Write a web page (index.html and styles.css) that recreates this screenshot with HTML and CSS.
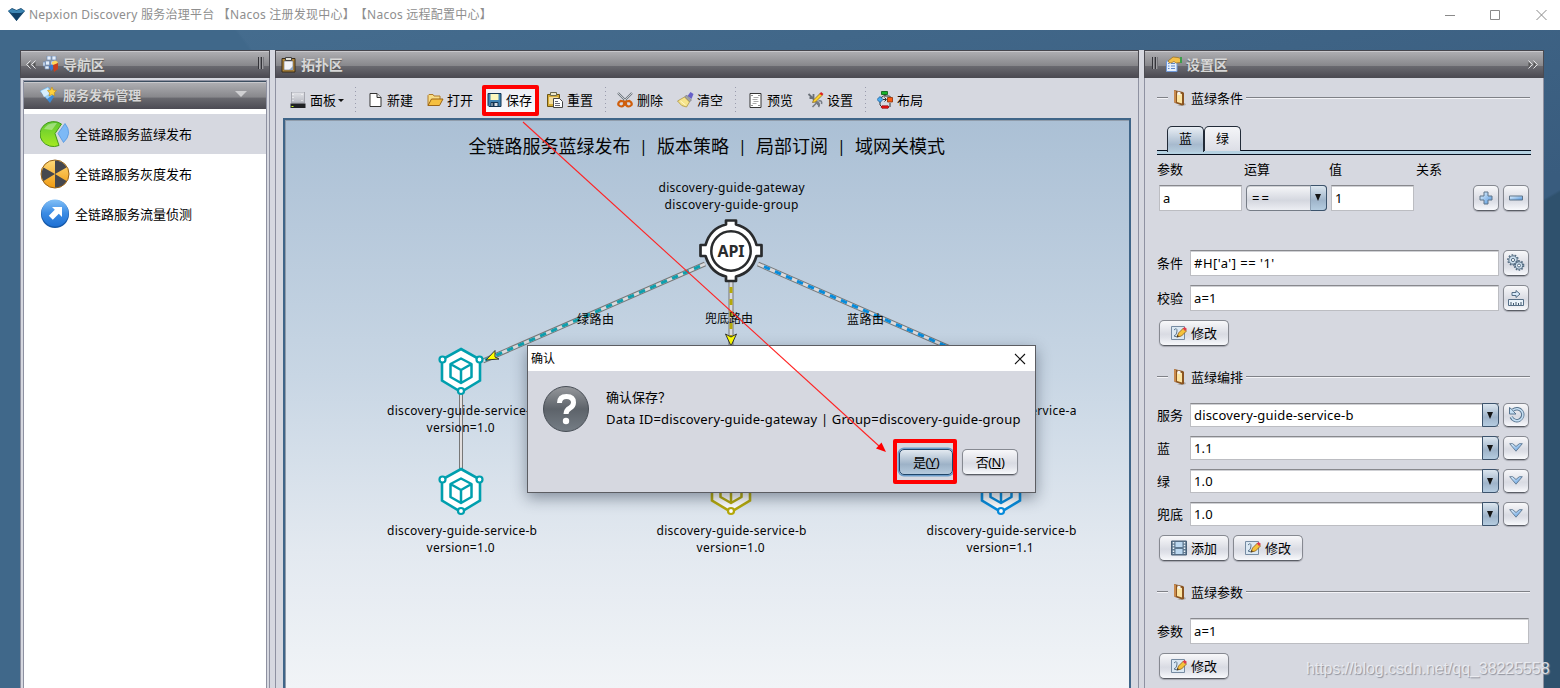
FILE: index.html
```
<!DOCTYPE html>
<html lang="zh-CN">
<head>
<meta charset="utf-8">
<title>Nepxion Discovery 服务治理平台</title>
<link rel="stylesheet" href="styles.css">
</head>
<body>
<svg class="defs" width="0" height="0">
  <defs>
    <linearGradient id="gBlue" x1="0" y1="0" x2="1" y2="1"><stop offset="0" stop-color="#eaf7ff"/><stop offset="1" stop-color="#4d92dc"/></linearGradient>
    <linearGradient id="gBall" x1="0" y1="0" x2="0" y2="1"><stop offset="0" stop-color="#82c0f7"/><stop offset=".5" stop-color="#3c8ce4"/><stop offset="1" stop-color="#1d70d4"/></linearGradient>
    <linearGradient id="gGreen" x1="0" y1="0" x2="0" y2="1"><stop offset="0" stop-color="#5fc832"/><stop offset="1" stop-color="#a4ea22"/></linearGradient>
    <linearGradient id="gAmber" x1="0" y1="0" x2="0" y2="1"><stop offset="0" stop-color="#ffdb7a"/><stop offset="1" stop-color="#f09a10"/></linearGradient>
    <linearGradient id="gAsk" x1="0" y1="0" x2="0" y2="1"><stop offset="0" stop-color="#96989c"/><stop offset=".5" stop-color="#5d636a"/><stop offset="1" stop-color="#757d85"/></linearGradient>
    <linearGradient id="gPage" x1="0" y1="0" x2="0" y2="1"><stop offset="0" stop-color="#e4e5ea"/><stop offset="1" stop-color="#b6b8c0"/></linearGradient>
    <symbol id="i-board" viewBox="0 0 13 16"><path d="M12 13l1 2-4 1H4z" fill="#aaa"/><path d="M1 0l9 2 1 1v12l-2 .5-7-2.500-1-1z" fill="#8a5420"/><path d="M1 0l2 1v12l-2-1z" fill="#c98a4d"/><path d="M4 3l5 1v9.500L4 12z" fill="#fbe4a2"/><path d="M4.500 1.500l3 .7v3l-3-.7z" fill="#f3f3f3"/></symbol>
    <symbol id="i-edit" viewBox="0 0 16 16"><path d="M.5 1.500h13v13H.5z" fill="#dbe8f3" stroke="#768ba2"/><path d="M3 5q3-3 3 1t-3 5q3 2 6 0" fill="none" stroke="#5e7890"/><path d="M6 12l1.500-4 5-5 3 3-5 5z" fill="#f5c23c" stroke="#8a5b16" stroke-width=".8"/><path d="M11.800 3.500L13.500 2l2.500 2-2 2z" fill="#e03a4c"/><path d="M6 12l.6-2 1.300 1.300z" fill="#222"/></symbol>
    <symbol id="i-check" viewBox="0 0 14 9"><path d="M.7.7h3L7 3.500 10.300.7h3L7 8.200z" fill="url(#gBlue)" stroke="#67809a"/></symbol>
    <symbol id="i-cube" viewBox="0 0 48 50" overflow="visible">
      <path d="M24 3L43 13.500v21L24 46 5 34.500v-21z" fill="#fff" stroke="currentColor" stroke-width="2.600"/>
      <path d="M24 12.500l10.500 5.500v13L24 37l-10.500-6V18zM13.500 18L24 24l10.500-6M24 24v13" fill="none" stroke="currentColor" stroke-width="2.500" stroke-linejoin="round"/>
      <g fill="#fff" stroke="currentColor" stroke-width="2.200"><circle cx="5.500" cy="13.500" r="3"/><circle cx="42.500" cy="13.500" r="3"/><circle cx="24" cy="45" r="3"/></g>
    </symbol>
  </defs>
</svg>

<header class="titlebar">
  <svg class="logo" width="17" height="13" viewBox="0 0 17 13"><path d="M0 3l4-3 4.500 2L13 0l4 3-8.500 10z" fill="#17496f"/><path d="M0 3l4-2 4.500 1.500L13 1l4 2-4 2H4z" fill="#3c86b4"/><path d="M4 5h9l-4.500 8z" fill="#0f3f66"/></svg>
  <span class="apptitle">Nepxion Discovery 服务治理平台 <span class="grp">【Nacos 注册发现中心】</span><span class="grp">【Nacos 远程配置中心】</span></span>
  <svg class="winctl" width="104" height="14" viewBox="0 0 104 14"><path d="M0 7.500h10M45.500 2.500h9v9h-9zM91.500 2l10 10M101.500 2l-10 10" fill="none" stroke="#8a8a8a"/></svg>
</header>

<main class="desk">
  <section class="panel nav">
    <div class="bar">
      <svg width="10" height="9" viewBox="0 0 10 9"><path d="M4.500.5L.5 4.500l4 4M9.500.5l-4 4 4 4" fill="none" stroke="#e2e2e4"/><path d="M4.500 2v5L2 4.500zM9.500 2v5L7 4.500z" fill="#555"/></svg>
      <svg class="ico-nav" width="16" height="16" viewBox="0 0 16 16"><path d="M4 0h4v4H4zM9 0h4v4H9zM2.500 5h4v4h-4zM0 6h2v4H0zM2 10h4v3H2zM8 5h4v4H8z" fill="#e4eefa" stroke="#6f8cb8" stroke-width=".7"/><path d="M6 10l4-2v5l-2 2z" fill="#3a78d0"/><path d="M9 6l3-1.500L15 6l-2 3.500-4-1z" fill="#ffd95c"/><path d="M10 9l5-2v6l-4 3z" fill="#c93f1c"/></svg>
      <b>导航区</b>
      <span class="grip"></span>
    </div>
    <div class="navbody">
      <div class="bar sub">
        <svg width="17" height="17" viewBox="0 0 17 17"><path d="M0 5l8-4 2 2 5 6-5 8z" fill="#3f8ad4"/><path d="M0 5l8-4 6 7-7 5z" fill="#9ad0f7"/><path d="M1 5l7-3 1 6-5 3z" fill="#d6eefc"/><path d="M12 1l1.300 3 3.200.5-2.300 2.300.5 3.200-2.700-1.500L9 10l.7-3L7.500 4.500l3-.5z" fill="#ffd23c" stroke="#c08914" stroke-width=".6"/></svg>
        <b>服务发布管理</b>
        <span class="tri"></span>
      </div>
      <ul class="menu">
        <li class="on">
          <svg width="30" height="28" viewBox="0 0 30 28"><path d="M15 13.500L21.500 4A13.500 12.500 0 1 0 19 25.500z" fill="url(#gGreen)" stroke="#469a1b"/><path d="M4 9Q8 2 17 3L12 10z" fill="#fff" opacity=".35"/><path d="M18 13.500L25 3.500q8 10-1.500 19z" fill="#7db9f6" stroke="#4b8fdc" stroke-width=".7"/></svg>全链路服务蓝绿发布</li>
        <li>
          <svg width="30" height="30" viewBox="0 0 30 30"><circle cx="15" cy="15" r="14" fill="url(#gAmber)" stroke="#96621b"/><path d="M15 15L15 1.500A13.500 13.500 0 0 1 26.500 8.500zM15 15L26.500 22A13.500 13.500 0 0 1 15 28.500zM15 15L3.500 22A13.500 13.500 0 0 1 3.500 8.500z" fill="#45474e"/></svg>全链路服务灰度发布</li>
        <li>
          <svg width="30" height="30" viewBox="0 0 30 30"><circle cx="15" cy="15" r="14" fill="#1558a8"/><circle cx="15" cy="14" r="13.500" fill="url(#gBall)"/><path d="M12 8h10v10l-3.200-3.200-6 6-4-4 6-6z" fill="#fff"/></svg>全链路服务流量侦测</li>
      </ul>
    </div>
  </section>

  <section class="panel topo">
    <div class="bar">
      <svg width="15" height="17" viewBox="0 0 15 17"><path d="M1 2.500h13v13.500H1z" fill="#b58a3a" stroke="#3a2c18"/><path d="M3 5h9v9H3z" fill="#f2f5fa" stroke="#4a4a52" stroke-width=".5"/><path d="M8 14l4-4v4z" fill="#8ea4c0"/><path d="M4.500 1.500h6v3h-6z" fill="#dcdcd4" stroke="#444"/></svg>
      <b>拓扑区</b>
    </div>
    <div class="toolbar">
      <button class="tool wide"><svg width="16" height="16" viewBox="0 0 16 16"><path d="M1 0h13v11H1z" fill="url(#gPage)" stroke="#9b9ca4" stroke-width=".8"/><path d="M2 2h1v1H2zM2 5h1v1H2zM2 8h1v1H2zM11 2h1v1h-1zM11 8h1v1h-1z" fill="#fff"/><path d="M0 11.500h15V16H0z" fill="#202124"/><path d="M1 14h2v1H1z" fill="#cf2"/></svg>面板<i class="caret"></i></button>
      <span class="sep"></span>
      <button class="tool"><svg width="16" height="16" viewBox="0 0 16 16"><path d="M2.500 1.500h7l4 4v9h-11z" fill="#fff" stroke="#333"/><path d="M9.500 1.500v4h4" fill="#ddd" stroke="#333"/></svg>新建</button>
      <button class="tool"><svg width="16" height="16" viewBox="0 0 16 16"><path d="M.5 13.500V3.500l1-1h4l1 1.500h6v3" fill="#f7dc86" stroke="#b07a28"/><path d="M.5 13.500L4 7h11.500l-3.500 6.500z" fill="#f5bf3f" stroke="#9c6516"/></svg>打开</button>
      <button class="tool save"><svg width="16" height="16" viewBox="0 0 16 16"><path d="M1.500 1.500h13v13H2.500l-1-1z" fill="#3f83b2" stroke="#123452"/><path d="M4 2h8v6H4z" fill="#fbf7bd"/><path d="M4.500 10.500h7v4h-7z" fill="#d8dde2" stroke="#123452"/><path d="M6 11h2v3H6z" fill="#123452"/></svg>保存</button>
      <button class="tool"><svg width="17" height="16" viewBox="0 0 17 16"><path d="M.5 2.500h12v12H.5z" fill="#d5ac37" stroke="#6d5515"/><path d="M3.500.5h6v3h-6z" fill="#eee8c8" stroke="#6d6a50"/><path d="M2 5h9v7H2z" fill="#f3dda0"/><path d="M6.500 6.500h6l3 3v6h-9z" fill="#fff" stroke="#444"/><path d="M8 9.500h3M8 11.500h5M8 13.500h5" stroke="#667"/></svg>重置</button>
      <span class="sep"></span>
      <button class="tool"><svg width="17" height="16" viewBox="0 0 17 16"><path d="M1 1l9 9M15 1L6 10" stroke="#6d747c" stroke-width="2.200"/><path d="M1 1l9 9M15 1L6 10" stroke="#dfe4e8" stroke-width=".8"/><path d="M7 9.500l-3.500-.5q-3 1.500-2 4 3 3 5.500 0zM9 9.500l3.500-.5q3 1.500 2 4-3 3-5.500 0z" fill="none" stroke="#cf5e0c" stroke-width="2.200"/></svg>删除</button>
      <button class="tool"><svg width="16" height="16" viewBox="0 0 16 16"><path d="M10 4l3-4 3 2-2 5z" fill="#6760c8"/><path d="M7 5l2-2 5 5-2 2z" fill="#a0a2a8" stroke="#666" stroke-width=".5"/><path d="M0 9l7-4 5 5-3 5q-5 0-9-6z" fill="#f6e48a" stroke="#a2893a" stroke-width=".7"/><path d="M3 9l5 4" stroke="#fff7c8"/></svg>清空</button>
      <span class="sep"></span>
      <button class="tool"><svg width="16" height="16" viewBox="0 0 16 16"><path d="M2.500 1.500h11v14h-11z" fill="#fff" stroke="#333"/><path d="M4 3h1v1H4zM11 3h1v1h-1zM4 13h1v1H4zM11 13h1v1h-1z" fill="#222"/><path d="M6 5.500h5M5 7.500h5M6 9.500h5M5 11.500h4" stroke="#aaa"/></svg>预览</button>
      <button class="tool"><svg width="16" height="17" viewBox="0 0 16 17"><path d="M1 2l5 5M6 2v4H2M6 7l6 7" fill="none" stroke="#6a7078" stroke-width="1.800"/><path d="M11 9q4-1 3 3M5 15l5-5q3 2 1 5" fill="none" stroke="#777c84" stroke-width="1.600"/><path d="M6 8l7-7 2 2-7 7-3 .5z" fill="#ffd32c" stroke="#80601a" stroke-width=".7"/><path d="M12 2l1.500-2L16 2l-1.500 1.500z" fill="#d22"/></svg>设置</button>
      <span class="sep"></span>
      <button class="tool"><svg width="17" height="18" viewBox="0 0 17 18"><path d="M8 2v3M3 10v4l2 2h7M13 12v4M3.500 7l3-2h6l1 1" fill="none" stroke="#333"/><path d="M4.500.5h6v3h-6z" fill="#18b42c" stroke="#065a10" stroke-width=".8"/><path d="M3 5.500L6 8.500 3 11.500 0 8.500z" fill="#49aaf0" stroke="#185a94" stroke-width=".8"/><path d="M10.500 6.500h5v4.500h-5z" fill="#fa5c12" stroke="#8a2e04" stroke-width=".8"/><path d="M5 14.800h6l1 1.200-1 1.300H5L4 16z" fill="#e11" stroke="#700" stroke-width=".6"/><path d="M6 8.500h3M7.500 6.500l2 2-2 2" fill="none" stroke="#333"/></svg>布局</button>
    </div>
    <div class="canvas">
      <svg class="graph" width="843" height="567" viewBox="285 120 843 567">
        <g font-size="18"><text x="468.500" y="153" textLength="162">全链路服务蓝绿发布</text><text x="657" y="153" textLength="72">版本策略</text><text x="756" y="153" textLength="72">局部订阅</text><text x="855" y="153" textLength="90">域网关模式</text></g>
        <g font-size="16"><text x="639" y="152">|</text><text x="738" y="152">|</text><text x="837" y="152">|</text></g>
        <g class="edges">
          <path d="M705 264L483 361" stroke="#777" stroke-width="5"/><path d="M705 264L483 361" stroke="#d9dadd" stroke-width="3"/><path d="M700 266.200L483 361" stroke="#0f9fae" stroke-width="3" stroke-dasharray="6.500 5.500"/>
          <path d="M731 281V350" stroke="#777" stroke-width="5"/><path d="M731 281V350" stroke="#d9dadd" stroke-width="3"/><path d="M731 287V350" stroke="#b5a90a" stroke-width="3" stroke-dasharray="6 6"/>
          <path d="M758 264L980 361" stroke="#777" stroke-width="5"/><path d="M758 264L980 361" stroke="#d9dadd" stroke-width="3"/><path d="M764 266.600L980 361" stroke="#078cdc" stroke-width="3" stroke-dasharray="6.500 5.500"/>
          <path d="M461 393v78M731 393v78M1001 393v78" stroke="#777" stroke-width="4"/><path d="M461 393v78M731 393v78M1001 393v78" stroke="#e3dfdf" stroke-width="2"/>
        </g>
        <path d="M486 360l9-9.500v6.500l4 2z" fill="#ff0" stroke="#333"/>
        <path d="M731 346l-5.500-12 5.500 3 5.500-3z" fill="#ff0" stroke="#333"/>
        <g stroke="#292b2d" stroke-width="2.700" fill="#fff"><path d="M726 220.500h10v4q16 4 20.500 20.500h5v11h-5q-5 17-20.500 20.500v4.500h-10v-4.500q-15-3.500-20.500-20.500h-5v-11h5q5-17 20.500-20.500z" stroke-linejoin="round"/><circle cx="731" cy="251" r="19.700" stroke-width="2.500"/></g>
        <text class="api" x="731" y="257" text-anchor="middle" textLength="27">API</text>
        <use href="#i-cube" x="437" y="346" width="48" height="50" color="#009fae"/>
        <use href="#i-cube" x="437" y="466" width="48" height="50" color="#009fae"/>
        <use href="#i-cube" x="707" y="466" width="48" height="50" color="#b5a90a"/>
        <use href="#i-cube" x="977" y="466" width="48" height="50" color="#078cdc"/>
        <g class="lab">
          <text x="658.500" y="192" textLength="146">discovery-guide-gateway</text><text x="664.500" y="209" textLength="134">discovery-guide-group</text>
          <text x="577" y="324" textLength="37">绿路由</text><text x="705" y="323" textLength="48">兜底路由</text><text x="847" y="324" textLength="37">蓝路由</text>
          <text x="387" y="415" textLength="150">discovery-guide-service-a</text><text x="426.500" y="432" textLength="68">version=1.0</text>
          <text x="387" y="535" textLength="150">discovery-guide-service-b</text><text x="426.500" y="552" textLength="68">version=1.0</text>
          <text x="656.500" y="535" textLength="150">discovery-guide-service-b</text><text x="696.500" y="552" textLength="68">version=1.0</text>
          <text x="926.500" y="415" textLength="150">discovery-guide-service-a</text>
          <text x="926.500" y="535" textLength="150">discovery-guide-service-b</text><text x="966.500" y="552" textLength="67">version=1.1</text>
        </g>
      </svg>
    </div>
  </section>

  <section class="panel setup">
    <div class="bar">
      <span class="grip"></span>
      <svg class="ico-set" width="17" height="16" viewBox="0 0 17 16"><path d="M1.500 5h10.500v10.500H1.500z" fill="#e4effc" stroke="#6e97d8"/><path d="M3 7.500h1.500M6 7.500h4M3 10h1.500M6 10h4M3 12.500h1.500M6 12.500h4" stroke="#5c86c8"/><path d="M3 5l5-4 5 .5 2.500 1v4L11 7 9 5.500 6 7 4 6.500z" fill="#f3c04a" stroke="#966a18" stroke-width=".7"/><path d="M15 1h2v6h-2z" fill="#3d9e4a"/></svg>
      <b>设置区</b>
      <svg class="chev" width="10" height="9" viewBox="0 0 10 9"><path d="M.5.5l4 4-4 4M5.500.5l4 4-4 4" fill="none" stroke="#e2e2e4"/><path d="M.5 2v5L3 4.500zM5.500 2v5L8 4.500z" fill="#555"/></svg>
    </div>
    <div class="form">
      <h3><svg width="13" height="16"><use href="#i-board"/></svg>蓝绿条件</h3>
      <div class="tabs"><span class="tab on">蓝</span><span class="tab">绿</span></div>
      <div class="cols"><span>参数</span><span>运算</span><span>值</span><span>关系</span></div>
      <div class="cond">
        <span class="field s">a</span><span class="combo op"><em>==</em><i class="drop"></i></span><span class="field s">1</span>
        <button class="sq first"><svg width="14" height="14" viewBox="0 0 14 14"><path d="M5 1h4v4h4v4H9v4H5V9H1V5h4z" fill="url(#gBlue)" stroke="#5e7489"/></svg></button>
        <button class="sq"><svg width="14" height="14" viewBox="0 0 14 14"><path d="M.5 5h13v4H.5z" fill="url(#gBlue)" stroke="#5e7489"/></svg></button>
      </div>
      <div class="row r1"><label>条件</label><span class="field expr">#H['a'] == '1'</span>
        <button class="sq"><svg width="18" height="18" viewBox="0 0 18 18"><g fill="#cfe0ee" stroke="#546c82"><circle cx="6" cy="6" r="4.200"/><circle cx="6" cy="6" r="5.200" fill="none" stroke-width="1.300" stroke-dasharray="1.700 1.500"/><circle cx="6" cy="6" r="1.600" fill="#fff"/><circle cx="12" cy="11.500" r="3.800"/><circle cx="12" cy="11.500" r="4.700" fill="none" stroke-width="1.300" stroke-dasharray="1.600 1.400"/><circle cx="12" cy="11.500" r="1.500" fill="#fff"/></g></svg></button></div>
      <div class="row r2"><label>校验</label><span class="field">a=1</span>
        <button class="sq"><svg width="18" height="18" viewBox="0 0 18 18"><path d="M5 3.500h4v-2l4 3.500-4 3.500v-2H5z" fill="#d8eafa" stroke="#556e86"/><path d="M1.500 10.500h15v6h-15z" fill="#eaf3fb" stroke="#556e86"/><path d="M4 16v-3M6.500 16v-2M9 16v-3M11.500 16v-2M14 16v-3" stroke="#40566c"/></svg></button></div>
      <div class="acts a1"><button class="btn"><svg width="16" height="16"><use href="#i-edit"/></svg>修改</button></div>

      <h3 class="h2"><svg width="13" height="16"><use href="#i-board"/></svg>蓝绿编排</h3>
      <div class="stack">
        <div class="row"><label>服务</label><span class="combo"><em>discovery-guide-service-b</em><i class="drop"></i></span><button class="sq"><svg width="17" height="17" viewBox="0 0 17 17"><path d="M5 4A6 6 0 1 1 3.200 11" fill="none" stroke="#587590" stroke-width="3.400"/><path d="M1.500 1.500V8H8L5.800 5.800 4.500 4z" fill="#c6dff3" stroke="#587590"/><path d="M5 4.200A6 6 0 1 1 3.400 11" fill="none" stroke="#c6dff3" stroke-width="1.600"/></svg></button></div>
        <div class="row"><label>蓝</label><span class="combo"><em>1.1</em><i class="drop"></i></span><button class="sq"><svg width="14" height="9"><use href="#i-check"/></svg></button></div>
        <div class="row"><label>绿</label><span class="combo"><em>1.0</em><i class="drop"></i></span><button class="sq"><svg width="14" height="9"><use href="#i-check"/></svg></button></div>
        <div class="row"><label>兜底</label><span class="combo"><em>1.0</em><i class="drop"></i></span><button class="sq"><svg width="14" height="9"><use href="#i-check"/></svg></button></div>
      </div>
      <div class="acts a2"><button class="btn"><svg width="16" height="16" viewBox="0 0 16 16"><path d="M.5 1h15v14H.5z" fill="#5e7890" stroke="#4a6178"/><path d="M4.500 2h7v5h-7zM4.500 9h7v5h-7z" fill="#bcd8f0"/><path d="M2.500 2v12M13.500 2v12" stroke="#eef5fb" stroke-width="1.500" stroke-dasharray="1.500 1.300"/></svg>添加</button><button class="btn"><svg width="16" height="16"><use href="#i-edit"/></svg>修改</button></div>

      <h3 class="h3"><svg width="13" height="16"><use href="#i-board"/></svg>蓝绿参数</h3>
      <div class="row r3"><label>参数</label><span class="field">a=1</span></div>
      <div class="acts a3"><button class="btn"><svg width="16" height="16"><use href="#i-edit"/></svg>修改</button></div>
    </div>
  </section>
</main>

<div class="dialog">
  <div class="dtitle">确认<svg width="12" height="12" viewBox="0 0 12 12"><path d="M1 1l10 10M11 1L1 11" stroke="#111" stroke-width="1.100"/></svg></div>
  <div class="dbody">
    <svg width="48" height="48" viewBox="0 0 48 48"><circle cx="24" cy="24" r="22.500" fill="url(#gAsk)" stroke="#484e56"/><path d="M17.500 18q0-6.500 7-6.500t7 6q0 3.500-3.500 5.500-4 2.200-4 6" fill="none" stroke="#fff" stroke-width="5"/><circle cx="24" cy="36" r="3.200" fill="#fff"/></svg>
    <p class="msg"><span>确认保存？</span><span class="data">Data ID=discovery-guide-gateway | Group=discovery-guide-group</span></p>
  </div>
  <div class="dacts"><button class="dbtn yes">是(<u>Y</u>)</button><button class="dbtn">否(<u>N</u>)</button></div>
</div>

<div class="mark m-save"></div>
<div class="mark m-yes"></div>
<svg class="arrow" width="366" height="336" viewBox="522 120 366 336"><path d="M523 122L879 446" stroke="#f22" stroke-width="1.100"/><path d="M886 452l-10-3.500 5.500-6z" fill="#f00"/></svg>
<div class="stamp">https://blog.csdn.net/qq_38225558</div>
</body>
</html>
```
FILE: styles.css
```
* { box-sizing: border-box; }
html, body { height: 688px; overflow: hidden; }
body { margin: 0; position: relative; display: flex; flex-direction: column; font: 13px/18px "Noto Sans", "Noto Sans CJK SC", sans-serif; color: #000; background: #fff; }
button { font: inherit; padding: 0; margin: 0; color: inherit; }
i, em { font-style: normal; }
svg { flex: none; display: block; }
.defs { position: absolute; }

.titlebar { height: 30px; flex: none; display: flex; align-items: center; padding: 0 11px 0 8px; background: #fff; color: #8e8e8e; }
.apptitle { margin-left: 4px; font-size: 12px; letter-spacing: .24px; white-space: nowrap; }
.grp { display: inline-block; width: 137px; }
.logo { margin-top: -2px; }
.winctl { margin: -1px 0 0 auto; }

.desk { flex: 1; min-height: 0; display: grid; grid-template-columns: 250px 864px 400px; column-gap: 5px; padding: 20px 16px 0 20px; background: linear-gradient(150deg, transparent 68%, #2f516d 68.200%), radial-gradient(ellipse 1300px 1500px at -250px 500px, #40688a 0 50%, transparent 50.2%), linear-gradient(168deg, #466e90 0, #395c7e 48%, #395c7e); }
.panel { min-width: 0; display: flex; flex-direction: column; background: #d6d8e0; border: 1px solid #8e91a1; border-width: 0 1px; box-shadow: 5px 0 #d6d8e0; }
.setup { box-shadow: none; }
.bar { height: 28px; flex: none; margin: 0 -1px; display: flex; align-items: center; padding: 0 5px 0 7px; border: 1px solid #4b4b52; border-top: 1px solid #46464d; box-shadow: inset 0 1px #c8c8cc; background: linear-gradient(#b0b0b4 0, #87878b 57%, #6a6a70 58%, #4c4b53 100%); color: #d7d7d7; }
.nav > .bar { padding-left: 5px; }
.topo > .bar { padding-left: 5px; }
.bar b { font-size: 14px; letter-spacing: -.1px; margin-top: 2px; text-shadow: 0 1px 1px #555; }
.grip { width: 6px; height: 12px; background: repeating-linear-gradient(90deg, #333338 0 1px, #a0a0a4 1px 2px, #77777c 2px 3px); margin-bottom: 2px; }
.nav .bar > b { margin-left: 4px; }
.ico-nav { margin-left: 7px; }
.nav > .bar .grip { margin-left: auto; }
.topo .bar b { margin-left: 5px; }
.setup .bar b { margin-left: 4px; }
.setup .ico-set { margin-left: 7px; }
.setup .chev { margin-left: auto; }

.navbody { flex: 1; margin: 2px 2px 0 2px; border: 1px solid #8e91a1; border-bottom: 0; background: #fff; }
.bar.sub { margin: 0; height: 28px; border: 0; border-top: 1px solid #3c4e60; padding: 0 19px 1px 16px; }
.bar.sub b { margin-left: 6px !important; font-size: 13px; margin-top: -1px; letter-spacing: .05px; }
.bar.sub svg { margin-top: -2px; }
.tri { margin: -2px 0 0 auto; border: 6px solid transparent; border-top-color: #d0d0d2; border-bottom: 0; }
.menu { list-style: none; margin: 5px 0 0; padding: 0; }
.menu li { height: 40px; display: flex; align-items: center; padding-left: 16px; gap: 5px; padding-bottom: 1px; }
.menu .on { background: #d6d8e0; }

.toolbar { height: 40px; flex: none; display: flex; align-items: center; padding: 5px 0 0 14px; }
.tool { width: 60px; height: 30px; flex: none; border: 0; background: none; display: flex; align-items: center; white-space: nowrap; padding-bottom: 1px; }
.tool svg { width: 17px; margin-right: 3px; }
.tool.wide { width: 67px; }
.tool.save { background: linear-gradient(#eceef4, #fafbfd); margin-left: -3px; padding-left: 2px; width: 53px; margin-right: 10px; height: 24px; }
.caret { margin-left: 2px; border: 3px solid transparent; border-top-color: #111; border-bottom: 0; }
.sep { width: 12px; height: 28px; flex: none; margin-left: -2px; background: repeating-linear-gradient(#9a9cae 0 1px, transparent 1px 4px) 0 0 / 1px 28px no-repeat; }
.canvas { flex: 1; min-height: 0; overflow: hidden; margin: 0 7px 0 7px; border: solid #3f6588; border-width: 2px 2px 0; background: linear-gradient(#abc0d5, #c8d6e4 45%, #e3e9f0 76%, #f1f4f7); box-shadow: inset 1px 1px #8f9cab; }
.graph text { fill: #050505; }
.lab { font-size: 12px; }
.graph .api { font-size: 16px; font-weight: 700; fill: #292b2d; }
.edges path { fill: none; }

.form { padding: 10px 13px 0 12px; display: flex; flex-direction: column; height: 610px; overflow: hidden; }
.form h3 { margin: 0; height: 20px; flex: none; display: flex; align-items: center; font-size: 13px; font-weight: 400; }
.form h3 svg { margin: 0 5px; }
.form h3::before, .form h3::after { content: ""; height: 2px; background: linear-gradient(#7f8187 50%, #f4f4f8 50%); width: 11px; }
.form h3::after { flex: 1; margin-left: 3px; }
.tabs { margin: 18px -1px 0 0; display: flex; height: 29px; padding: 0 0 5px 10px; background: linear-gradient(#07101f 0 1px, #b6d2e2 1px 4px, #07101f 4px 5px) 0 100% / 100% 5px no-repeat; }
.tab { width: 37px; height: 25px; border: 1px solid #222b38; border-bottom: 0; border-radius: 5px 5px 0 0; background: linear-gradient(#f4f5f8, #dcdee6); text-align: center; line-height: 22px; }
.tab.on { background: linear-gradient(#e9eef4 0, #a7bace 70%, #b4cbdc); height: 26px; }
.cols { display: grid; grid-template-columns: 87px 85px 87px auto; margin-top: 5px; flex: none; }
.cond { display: flex; margin: 7px 0 0 2px; height: 26px; flex: none; padding-right: 1px; }
.field, .combo { background: #fff; border: 1px solid #bcbdc2; border-top: 1px solid #88898e; box-shadow: inset 0 1px #cfd0d4; display: flex; align-items: center; padding-left: 3px; min-width: 0; letter-spacing: .18px; white-space: pre; height: 26px; }
.field.s { width: 83px; flex: none; }
.field.expr { letter-spacing: .48px; }
.combo { position: relative; height: 24px; border-right: 0; }
.drop { position: absolute; right: 0; top: -1px; bottom: -1px; width: 17px; border: 1px solid #3c536c; border-radius: 0 4px 4px 0; background: linear-gradient(#dce6ef, #9fb4ca 60%, #b5cce0); }
.drop::after { content: ""; position: absolute; left: 4px; top: 8px; border: 4px solid transparent; border-top: 7px solid #151515; border-bottom: 0; border-left-width: 3.500px; border-right-width: 3.500px; }
.combo.op { width: 81px; height: 26px; flex: none; margin: 0 4px; border: 1px solid #777d87; border-radius: 4px; background: linear-gradient(#f6f7f9, #d4d7df 60%, #eceef3); padding-left: 5px; letter-spacing: 2px; }
.combo.op .drop { right: -1px; border-left-color: #8da0b4; }
.sq, .btn, .dbtn { border: 1px solid #868991; border-bottom-color: #5b5e66; border-radius: 5px; background: linear-gradient(#f8f8fa 0, #d9dbe3 55%, #e0e2e9 70%, #f8f9fc); box-shadow: 0 1px 1px #a5a7af; display: flex; align-items: center; justify-content: center; }
.sq { width: 26px; flex: none; margin-left: 4px; }
.sq svg { margin-top: -1px; }
.sq.first { margin-left: auto; }
.row { display: grid; grid-template-columns: 33px 1fr auto; flex: none; padding-right: 1px; }
.row label { align-self: center; }
.r1 { margin-top: 39px; }
.r2 { margin-top: 9px; }
.acts { display: flex; gap: 4px; margin: 9px 0 0 2px; flex: none; }
.btn { width: 70px; height: 26px; gap: 4px; padding-left: 0; }
.h2 { margin-top: 21px !important; }
.stack { display: grid; gap: 9px; margin-top: 16px; }
.h3 { margin-top: 21px !important; }
.r3 { margin-top: 16px; }

.dialog { position: absolute; left: 527px; top: 345px; width: 509px; height: 148px; border: 1px solid #5c5d62; background: #d6d8e0; box-shadow: 0 5px 14px rgba(20, 30, 50, .42); }
.dtitle { height: 25px; background: #fff; display: flex; justify-content: space-between; align-items: center; padding: 0 9px 0 3px; font-size: 12px; }
.dbody { display: flex; padding: 14px 0 0 14px; height: 78px; }
.msg { margin: 3px 0 0 16px; display: flex; flex-direction: column; gap: 4px; white-space: nowrap; }
.data { letter-spacing: .2px; }
.dacts { display: flex; justify-content: flex-end; gap: 9px; padding-right: 17px; }
.dbtn { width: 56px; height: 26px; letter-spacing: -.5px; }
.yes { width: 54px; background: linear-gradient(#e2e9f0, #9db2c7 60%, #b5cadd); border-color: #20466a; box-shadow: 0 0 0 1.500px #6d9dca; }
.mark { position: absolute; border: 4px solid #f00; border-radius: 2px; }
.m-save { left: 482px; top: 85px; width: 57px; height: 31px; }
.m-yes { left: 893px; top: 439px; width: 64px; height: 45px; }
.arrow { position: absolute; left: 522px; top: 120px; pointer-events: none; }
.stamp { position: absolute; left: 1306px; top: 659px; font: 16px/20px "Liberation Sans", Arial, sans-serif; letter-spacing: -.06px; color: rgba(240, 241, 245, .85); text-shadow: 1px 1px 1px #8f929c; white-space: nowrap; }
```
